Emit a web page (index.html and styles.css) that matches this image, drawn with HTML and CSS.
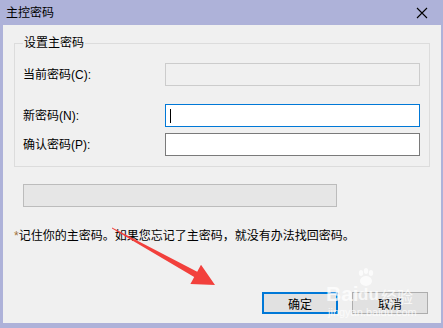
FILE: index.html
```html
<!DOCTYPE html>
<html lang="zh-CN">
<head>
    <meta charset="UTF-8">
    <title>主控密码</title>
    <link rel="stylesheet" href="styles.css">
</head>
<body>
    <div class="window">
        <div class="title-bar">
            <span class="title">主控密码</span>
            <svg class="close" width="12" height="12" viewBox="0 0 12 12">
                <path d="M1 1 L11 11 M11 1 L1 11" stroke="#000" stroke-width="1.1" fill="none"/>
            </svg>
        </div>
        <div class="content">
            <fieldset class="group">
                <legend>设置主密码</legend>
                <div class="row">
                    <label>当前密码(C):</label>
                    <div class="field disabled"></div>
                </div>
                <div class="row row-new">
                    <label>新密码(N):</label>
                    <div class="field focused"><span class="caret"></span></div>
                </div>
                <div class="row row-confirm">
                    <label>确认密码(P):</label>
                    <div class="field"></div>
                </div>
            </fieldset>

            <div class="strength"></div>

            <p class="note"><span class="star">*</span>记住你的主密码。如果您忘记了主密码，就没有办法找回密码。</p>

            <div class="buttons">
                <button class="btn default">确定</button>
                <button class="btn">取消</button>
            </div>

            <!-- 水印 -->
            <div class="watermark">
                <span class="wm-bai">Bai</span>
                <svg class="wm-paw" width="18" height="20" viewBox="0 0 18 20">
                    <ellipse cx="4" cy="5" rx="2.2" ry="3" fill="#fff"/>
                    <ellipse cx="9" cy="3" rx="2.2" ry="3" fill="#fff"/>
                    <ellipse cx="14" cy="5" rx="2.2" ry="3" fill="#fff"/>
                    <ellipse cx="9" cy="13" rx="6" ry="5" fill="#fff"/>
                </svg>
                <span class="wm-du">du</span>
                <span class="wm-jy">经验</span>
                <span class="wm-url">jingyan.baidu.com</span>
            </div>

            <svg class="arrow" width="443" height="328" viewBox="0 0 443 328">
                <polygon points="112,227.4 197.2,271.8 201,264.8 215,285 190.4,284 194.2,277 112,228.6" fill="#f2403c"/>
            </svg>
        </div>
    </div>
</body>
</html>
```

FILE: styles.css
```css
body {
    margin: 0;
    font-family: "Liberation Sans", "Noto Sans CJK SC", sans-serif;
    font-size: 12px;
    color: #000;
}
.window {
    width: 443px;
    height: 328px;
    box-sizing: border-box;
    background: #aeb2d9;
    padding: 0 2px 5px 3px;
    display: flex;
    flex-direction: column;
}
.title-bar {
    height: 25px;
    display: flex;
    align-items: center;
    justify-content: space-between;
    padding: 0 13px 0 3px;
}
.title {
    font-size: 12px;
    line-height: 16px;
}
.close {
    display: block;
}
.content {
    flex: 1;
    background: #f0f0f0;
    display: flex;
    flex-direction: column;
}
.group {
    margin: 10px 11px 0 11px;
    padding: 12px 9px 10px 8px;
    border: 1px solid #dcdcdc;
    min-width: 0;
}
.group legend {
    padding: 0 1px;
    line-height: 16px;
    height: 16px;
}
.row {
    display: flex;
    align-items: center;
    height: 23px;
}
.row label {
    width: 142px;
    line-height: 16px;
}
.row-new {
    margin-top: 18px;
}
.row-confirm {
    margin-top: 6px;
}
.field {
    flex: 1;
    height: 23px;
    box-sizing: border-box;
    border: 1px solid #7a7a7a;
    background: #fff;
    display: flex;
    align-items: center;
    padding-left: 4px;
}
.field.disabled {
    background: #f0f0f0;
    border-color: #cccccc;
}
.field.focused {
    border-color: #0078d7;
}
.caret {
    width: 1px;
    height: 14px;
    background: #000;
}
.strength {
    margin: 17px 0 0 20px;
    width: 314px;
    height: 23px;
    box-sizing: border-box;
    background: #e6e6e6;
    border: 1px solid #bcbcbc;
}
.note {
    margin: 21px 0 0 11px;
    line-height: 16px;
}
.star {
    color: #a0703a;
}
.buttons {
    margin-top: auto;
    display: flex;
    justify-content: flex-end;
    gap: 14px;
    padding: 0 13px 9px 0;
}
.btn {
    width: 76px;
    height: 22px;
    box-sizing: border-box;
    background: #e1e1e1;
    border: 1px solid #adadad;
    font-family: inherit;
    font-size: 12px;
    padding: 0;
    color: #000;
}
.btn.default {
    border: 2px solid #0078d7;
}
.watermark {
    position: absolute;
    left: 326px;
    top: 268px;
    width: 100px;
    height: 52px;
    color: #fff;
    opacity: 0.75;
    pointer-events: none;
}
.wm-bai {
    position: absolute;
    left: 0;
    top: 14px;
    font-size: 21px;
    font-weight: bold;
    font-family: "Liberation Sans", sans-serif;
}
.wm-paw {
    position: absolute;
    left: 31px;
    top: 0;
}
.wm-du {
    position: absolute;
    left: 32px;
    top: 17px;
    font-size: 17px;
    font-weight: bold;
    font-family: "Liberation Sans", sans-serif;
}
.wm-jy {
    position: absolute;
    left: 55px;
    top: 16px;
    font-size: 16px;
    font-family: "Noto Sans CJK SC", sans-serif;
}
.wm-url {
    position: absolute;
    left: 2px;
    top: 38px;
    font-size: 11px;
    font-family: "Liberation Sans", sans-serif;
}
.arrow {
    position: absolute;
    left: 0;
    top: 0;
    pointer-events: none;
}
```
